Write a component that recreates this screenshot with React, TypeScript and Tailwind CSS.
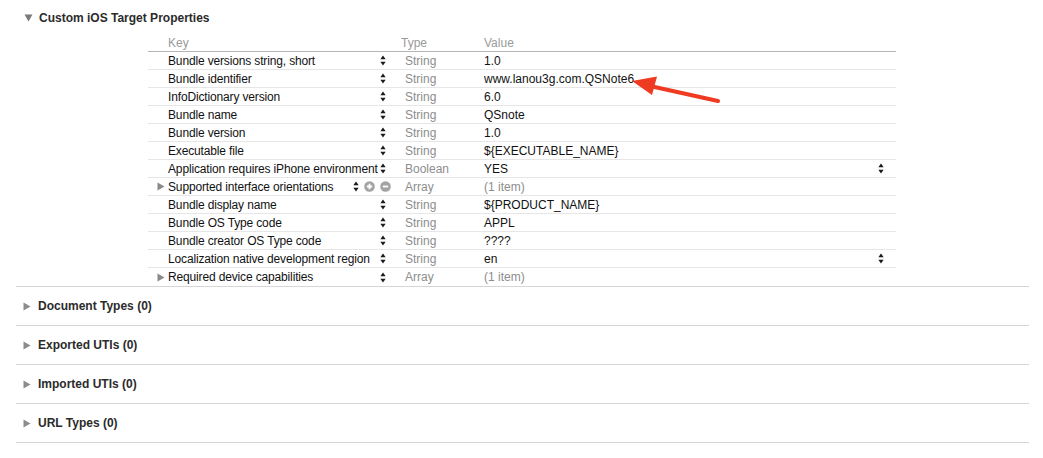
import type { ReactNode } from 'react'

type Fila = {
  clave: string
  tipo: string
  valor: string
  grupo?: boolean
  selector?: boolean
  acciones?: boolean
}

const filas: Fila[] = [
  { clave: 'Bundle versions string, short', tipo: 'String', valor: '1.0' },
  { clave: 'Bundle identifier', tipo: 'String', valor: 'www.lanou3g.com.QSNote6' },
  { clave: 'InfoDictionary version', tipo: 'String', valor: '6.0' },
  { clave: 'Bundle name', tipo: 'String', valor: 'QSnote' },
  { clave: 'Bundle version', tipo: 'String', valor: '1.0' },
  { clave: 'Executable file', tipo: 'String', valor: '${EXECUTABLE_NAME}' },
  { clave: 'Application requires iPhone environment', tipo: 'Boolean', valor: 'YES', selector: true },
  { clave: 'Supported interface orientations', tipo: 'Array', valor: '(1 item)', grupo: true, acciones: true },
  { clave: 'Bundle display name', tipo: 'String', valor: '${PRODUCT_NAME}' },
  { clave: 'Bundle OS Type code', tipo: 'String', valor: 'APPL' },
  { clave: 'Bundle creator OS Type code', tipo: 'String', valor: '????' },
  { clave: 'Localization native development region', tipo: 'String', valor: 'en', selector: true },
  { clave: 'Required device capabilities', tipo: 'Array', valor: '(1 item)', grupo: true },
]

const secciones = ['Document Types (0)', 'Exported UTIs (0)', 'Imported UTIs (0)', 'URL Types (0)']

function Stepper() {
  return (
    <svg width="6" height="11" viewBox="0 0 6 11" className="shrink-0">
      <path d="M3 0.5 L5.6 4.2 L0.4 4.2 Z" fill="#1a1a1a" />
      <path d="M3 10.5 L5.6 6.8 L0.4 6.8 Z" fill="#1a1a1a" />
    </svg>
  )
}

function Triangulo({ abierto, color = '#8c8c8c' }: { abierto?: boolean; color?: string }) {
  return abierto ? (
    <svg width="9" height="8" viewBox="0 0 9 8">
      <path d="M0.5 0.5 L8.5 0.5 L4.5 7.5 Z" fill={color} />
    </svg>
  ) : (
    <svg width="8" height="9" viewBox="0 0 8 9">
      <path d="M0.5 0.5 L7.5 4.5 L0.5 8.5 Z" fill={color} />
    </svg>
  )
}

function BotonCirculo({ children }: { children: ReactNode }) {
  return (
    <svg width="11" height="11" viewBox="0 0 11 11" className="shrink-0">
      <circle cx="5.5" cy="5.5" r="5.3" fill="#a3a3a3" />
      {children}
    </svg>
  )
}

export default function App() {
  return (
    <div
      className="relative h-[458px] w-[1043px] overflow-hidden bg-white text-[12px] text-[#111]"
      style={{ fontFamily: '"Lucida Grande", "Liberation Sans", Arial, sans-serif' }}
    >
      <div className="flex h-[28px] items-center gap-[6px] pt-[8px] pl-[24px]">
        <Triangulo abierto color="#7a7a7a" />
        <span className="text-[12px] font-bold text-[#2b2b2b]">Custom iOS Target Properties</span>
      </div>

      <div className="mt-[6px] ml-[148px] w-[748px]">
        <div className="flex h-[18px] items-center border-b border-[#b5b5b5] text-[#9a9a9a]">
          <div className="w-[245px] pl-[20px]">Key</div>
          <div className="w-[83px] pl-[8px]">Type</div>
          <div className="flex-1 pl-[8px]">Value</div>
        </div>
        {filas.map((f, i) => (
          <div
            key={f.clave}
            className={`flex h-[18px] items-center ${i < filas.length - 1 ? 'border-b border-[#e6e6e6]' : ''}`}
          >
            <div className={`flex w-[245px] items-center ${f.acciones ? 'pr-[2px]' : 'pr-[7px]'}`}>
              <div className="flex w-[20px] shrink-0 justify-end pr-[3px]">
                {f.grupo && <Triangulo color="#8a8a8a" />}
              </div>
              <span className="min-w-0 flex-1 whitespace-nowrap tracking-[-0.15px]">{f.clave}</span>
              <div className="flex shrink-0 items-center gap-[5px] pl-[2px]">
                <Stepper />
                {f.acciones && (
                  <>
                    <BotonCirculo>
                      <path d="M5.5 2.8 V8.2 M2.8 5.5 H8.2" stroke="white" strokeWidth="1.8" />
                    </BotonCirculo>
                    <BotonCirculo>
                      <path d="M2.8 5.5 H8.2" stroke="white" strokeWidth="1.8" />
                    </BotonCirculo>
                  </>
                )}
              </div>
            </div>
            <div className="w-[83px] pl-[12px] text-[#8d8d8d]">{f.tipo}</div>
            <div className="flex flex-1 items-center pr-[12px] pl-[8px]">
              <span className={`flex-1 ${f.grupo ? 'text-[#8d8d8d]' : ''}`}>{f.valor}</span>
              {f.selector && <Stepper />}
            </div>
          </div>
        ))}
      </div>

      <div className="mr-[14px] ml-[16px]">
        {secciones.map(s => (
          <div key={s} className="flex h-[39px] items-center gap-[7px] border-t border-[#d6d6d6] pl-[7px]">
            <Triangulo color="#8c8c8c" />
            <span className="text-[12px] font-bold text-[#2b2b2b]">{s}</span>
          </div>
        ))}
        <div className="border-t border-[#d6d6d6]" />
      </div>

      <svg className="pointer-events-none absolute top-0 left-0" width="1043" height="458">
        <line x1="650" y1="86" x2="718" y2="101" stroke="#ee3b22" strokeWidth="4" strokeLinecap="round" />
        <path d="M632 81 L657 76.5 L652 95 Z" fill="#ee3b22" />
      </svg>
    </div>
  )
}
